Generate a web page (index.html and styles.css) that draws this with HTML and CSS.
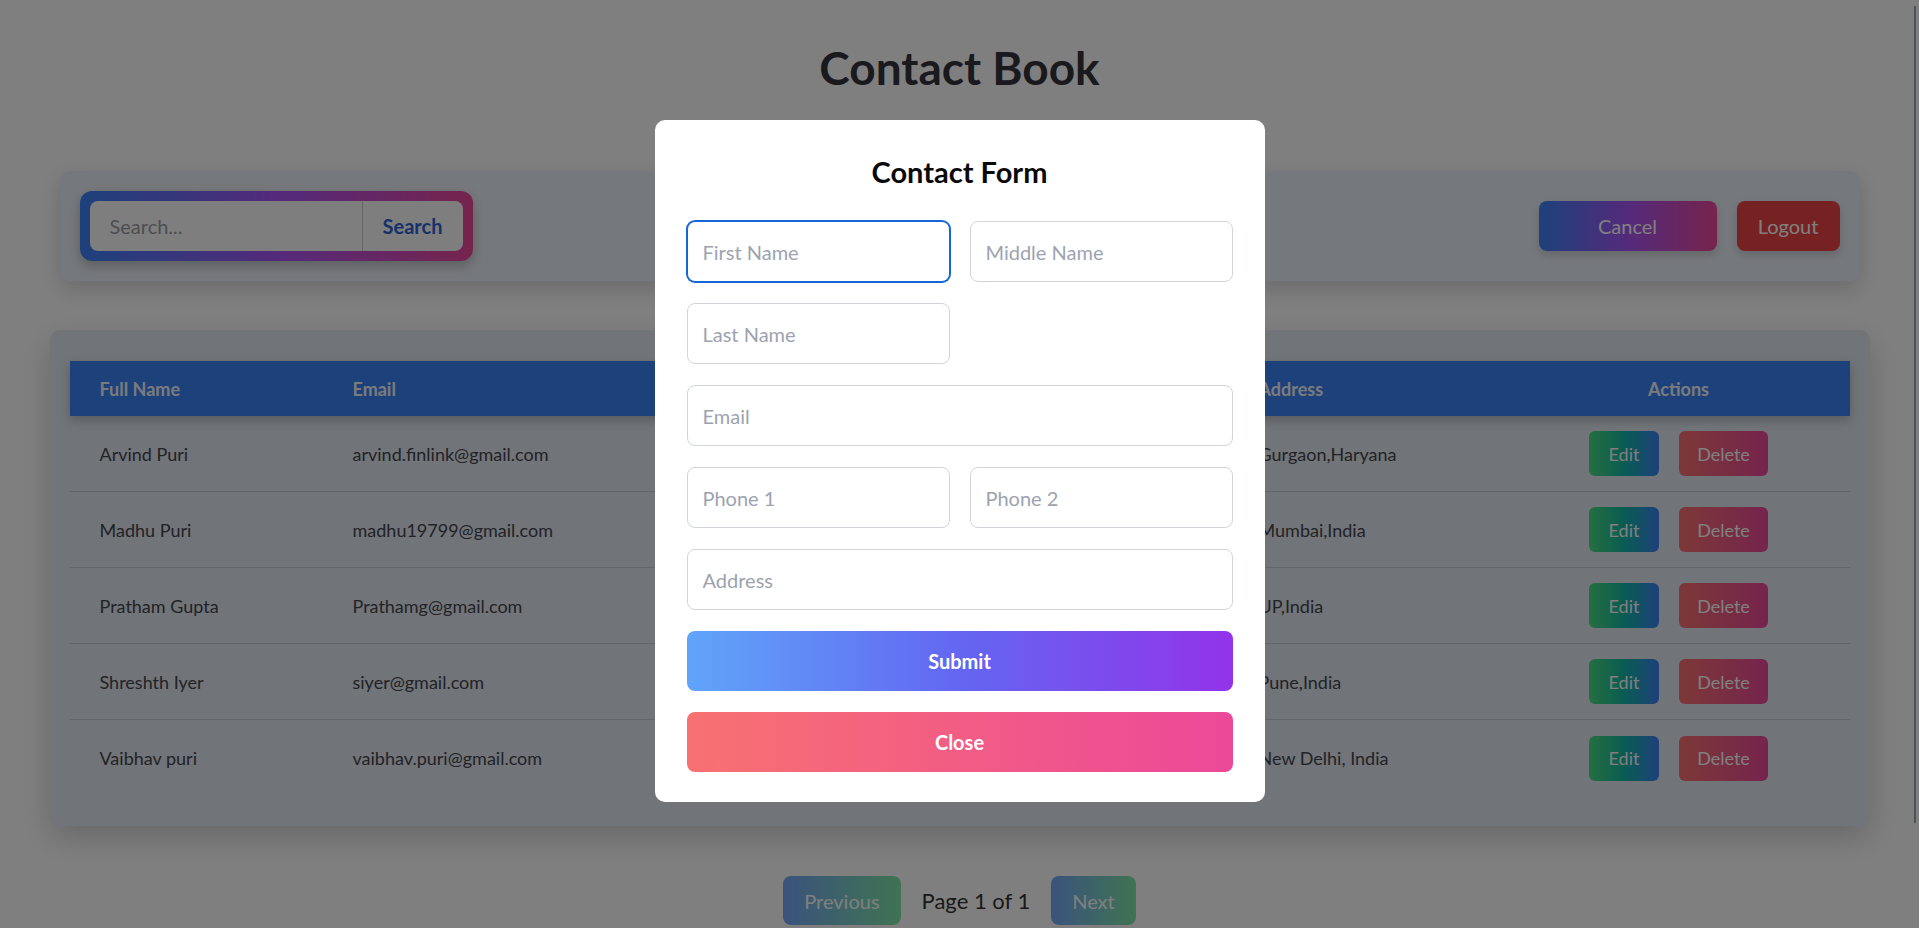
FILE: index.html
```html
<!DOCTYPE html>
<html lang="en">
<head>
<meta charset="utf-8">
<title>Contact Book</title>
<link rel="stylesheet" href="styles.css">
</head>
<body>
<div class="app">
  <h1 class="page-title">Contact Book</h1>

  <div class="toolbar">
    <div class="search-box">
      <div class="search-inner">
        <input class="search-input" type="text" placeholder="Search...">
        <button class="search-btn" type="button">Search</button>
      </div>
    </div>
    <div class="toolbar-actions">
      <button class="btn-cancel" type="button">Cancel</button>
      <button class="btn-logout" type="button">Logout</button>
    </div>
  </div>

  <div class="table-card">
    <table class="contacts">
      <colgroup>
        <col class="col-name">
        <col class="col-email">
        <col class="col-phone">
        <col class="col-phone">
        <col class="col-address">
        <col class="col-actions">
      </colgroup>
      <thead>
        <tr>
          <th>Full Name</th>
          <th>Email</th>
          <th></th>
          <th></th>
          <th>Address</th>
          <th class="th-actions">Actions</th>
        </tr>
      </thead>
      <tbody>
        <tr>
          <td>Arvind Puri</td>
          <td>arvind.finlink@gmail.com</td>
          <td></td>
          <td></td>
          <td>Gurgaon,Haryana</td>
          <td><div class="row-actions"><button class="btn-edit" type="button">Edit</button><button class="btn-delete" type="button">Delete</button></div></td>
        </tr>
        <tr>
          <td>Madhu Puri</td>
          <td>madhu19799@gmail.com</td>
          <td></td>
          <td></td>
          <td>Mumbai,India</td>
          <td><div class="row-actions"><button class="btn-edit" type="button">Edit</button><button class="btn-delete" type="button">Delete</button></div></td>
        </tr>
        <tr>
          <td>Pratham Gupta</td>
          <td>Prathamg@gmail.com</td>
          <td></td>
          <td></td>
          <td>UP,India</td>
          <td><div class="row-actions"><button class="btn-edit" type="button">Edit</button><button class="btn-delete" type="button">Delete</button></div></td>
        </tr>
        <tr>
          <td>Shreshth Iyer</td>
          <td>siyer@gmail.com</td>
          <td></td>
          <td></td>
          <td>Pune,India</td>
          <td><div class="row-actions"><button class="btn-edit" type="button">Edit</button><button class="btn-delete" type="button">Delete</button></div></td>
        </tr>
        <tr>
          <td>Vaibhav puri</td>
          <td>vaibhav.puri@gmail.com</td>
          <td></td>
          <td></td>
          <td>New Delhi, India</td>
          <td><div class="row-actions"><button class="btn-edit" type="button">Edit</button><button class="btn-delete" type="button">Delete</button></div></td>
        </tr>
      </tbody>
    </table>
  </div>

  <div class="pagination">
    <button class="page-btn" type="button" disabled>Previous</button>
    <span class="page-info">Page 1 of 1</span>
    <button class="page-btn" type="button" disabled>Next</button>
  </div>
</div>

<div class="overlay">
  <div class="modal">
    <h2 class="modal-title">Contact Form</h2>
    <form class="form-grid">
      <input class="field focused" type="text" placeholder="First Name">
      <input class="field" type="text" placeholder="Middle Name">
      <input class="field" type="text" placeholder="Last Name">
      <input class="field span-2" type="email" placeholder="Email">
      <input class="field" type="text" placeholder="Phone 1">
      <input class="field" type="text" placeholder="Phone 2">
      <input class="field span-2" type="text" placeholder="Address">
      <button class="btn-submit span-2" type="button">Submit</button>
      <button class="btn-close span-2" type="button">Close</button>
    </form>
  </div>
</div>

<div class="scroll-thumb"></div>
</body>
</html>
```

FILE: styles.css
```css
* {
  box-sizing: border-box;
}

html, body {
  margin: 0;
  padding: 0;
  height: 100%;
  overflow: hidden;
}

body {
  background: #ffffff;
  font-family: "Lato", "Open Sans", sans-serif;
  color: #333333;
}

button, input {
  font-family: inherit;
}

.app {
  width: 1820px;
  margin: 0 auto;
  padding-top: 41px;
}

.page-title {
  margin: 0;
  font-size: 46px;
  line-height: 54px;
  font-weight: 700;
  text-align: center;
  color: #35353d;
}

/* toolbar */
.toolbar {
  margin: 76px 10px 0;
  height: 110px;
  padding: 20px;
  background: #ebf0f8;
  border-radius: 10px;
  display: flex;
  align-items: center;
  justify-content: space-between;
  box-shadow: 0 8px 22px rgba(0, 0, 0, 0.16);
}

.search-box {
  width: 393px;
  height: 70px;
  padding: 10px;
  border-radius: 12px;
  background: linear-gradient(to right, #3b82f6, #a855f7, #ec4899);
  box-shadow: 0 5px 12px rgba(0, 0, 0, 0.22);
}

.search-inner {
  display: flex;
  height: 100%;
  background: #fdfdfd;
  border-radius: 8px;
  overflow: hidden;
}

.search-input {
  flex: 1;
  min-width: 0;
  border: none;
  outline: none;
  background: transparent;
  padding: 0 20px;
  font-size: 20px;
  color: #333;
}

.search-input::placeholder {
  color: #9a9ca3;
}

.search-btn {
  width: 101px;
  border: none;
  border-left: 1px solid #c8c8c8;
  background: transparent;
  font-size: 20px;
  font-weight: 700;
  color: #2f62d8;
  padding: 0;
}

.toolbar-actions {
  display: flex;
  gap: 20px;
}

.btn-cancel,
.btn-logout {
  height: 50px;
  border: none;
  border-radius: 8px;
  font-size: 20px;
  color: #ffffff;
  box-shadow: 0 4px 10px rgba(0, 0, 0, 0.15);
}

.btn-cancel {
  width: 178px;
  background: linear-gradient(to right, #3b82f6, #a855f7, #ec4899);
}

.btn-logout {
  width: 103px;
  background: #ef4444;
}

/* table */
.table-card {
  margin-top: 49px;
  padding: 31px 20px 30px;
  background: #e2e8f0;
  border-radius: 10px;
  box-shadow: 0 12px 30px rgba(0, 0, 0, 0.18);
}

.contacts {
  width: 100%;
  table-layout: fixed;
  border-collapse: separate;
  border-spacing: 0;
  font-size: 18px;
}

.col-name { width: 253px; }
.col-email { width: 330px; }
.col-phone { width: 288px; }
.col-address { width: 279px; }
.col-actions { width: 342px; }

.contacts thead tr {
  height: 55px;
  background: #3b82f6;
  box-shadow: 0 4px 10px rgba(0, 0, 0, 0.22);
}

.contacts th {
  padding: 0 30px;
  text-align: left;
  font-weight: 700;
  color: #f4f6fb;
}

.contacts th.th-actions {
  text-align: center;
}

.contacts tbody tr {
  height: 76px;
}

.contacts td {
  padding: 0 30px;
  color: #46464e;
  border-bottom: 1px solid #c5ccd6;
  white-space: nowrap;
}

.contacts tbody tr:last-child td {
  border-bottom: none;
}

.row-actions {
  display: flex;
  justify-content: center;
  gap: 20px;
}

.btn-edit,
.btn-delete {
  height: 45px;
  padding: 0;
  border: none;
  border-radius: 6px;
  font-size: 18px;
  color: #ffffff;
}

.btn-edit {
  width: 70px;
  background: linear-gradient(to right, #4ade80, #14b8a6 50%, #3b82f6);
}

.btn-delete {
  width: 89px;
  background: linear-gradient(to right, #f87171, #ec4899);
}

/* pagination */
.pagination {
  margin-top: 50px;
  display: flex;
  justify-content: center;
  align-items: center;
  gap: 21px;
}

.page-btn {
  height: 49px;
  padding: 0 21px;
  border: none;
  border-radius: 8px;
  font-size: 20px;
  color: #ffffff;
  background: linear-gradient(to right, #3b82f6, #4ade80);
  opacity: 0.7;
}

.page-info {
  font-size: 22px;
  color: #333333;
}

/* modal */
.overlay {
  position: fixed;
  inset: 0;
  background: rgba(0, 0, 0, 0.5);
  display: flex;
  justify-content: center;
  align-items: flex-start;
  padding-top: 120px;
}

.modal {
  width: 610px;
  padding: 32px 32px 30px;
  background: #ffffff;
  border-radius: 10px;
}

.modal-title {
  margin: 0 0 29px;
  font-size: 29px;
  line-height: 40px;
  font-weight: 700;
  text-align: center;
  color: #0a0a0a;
}

.form-grid {
  display: grid;
  grid-template-columns: repeat(2, minmax(0, 1fr));
  gap: 21px 20px;
  margin: 0;
}

.span-2 {
  grid-column: span 2;
}

.field {
  width: 100%;
  min-width: 0;
  height: 61px;
  padding: 0 15px;
  border: 1px solid #d1d5db;
  border-radius: 8px;
  font-size: 20px;
  color: #333;
  background: #ffffff;
  outline: none;
}

.field::placeholder {
  color: #9ca3af;
}

.field.focused {
  border-color: #1466d9;
  box-shadow: 0 0 0 1px #1466d9;
}

.btn-submit,
.btn-close {
  height: 60px;
  border: none;
  border-radius: 8px;
  font-size: 20px;
  font-weight: 700;
  color: #ffffff;
}

.btn-submit {
  background: linear-gradient(to right, #60a5fa, #6366f1 50%, #9333ea);
}

.btn-close {
  background: linear-gradient(to right, #f87171, #ec4899);
}

.scroll-thumb {
  position: fixed;
  top: 6px;
  right: 3px;
  width: 2px;
  height: 817px;
  background: #4d525a;
}
```
